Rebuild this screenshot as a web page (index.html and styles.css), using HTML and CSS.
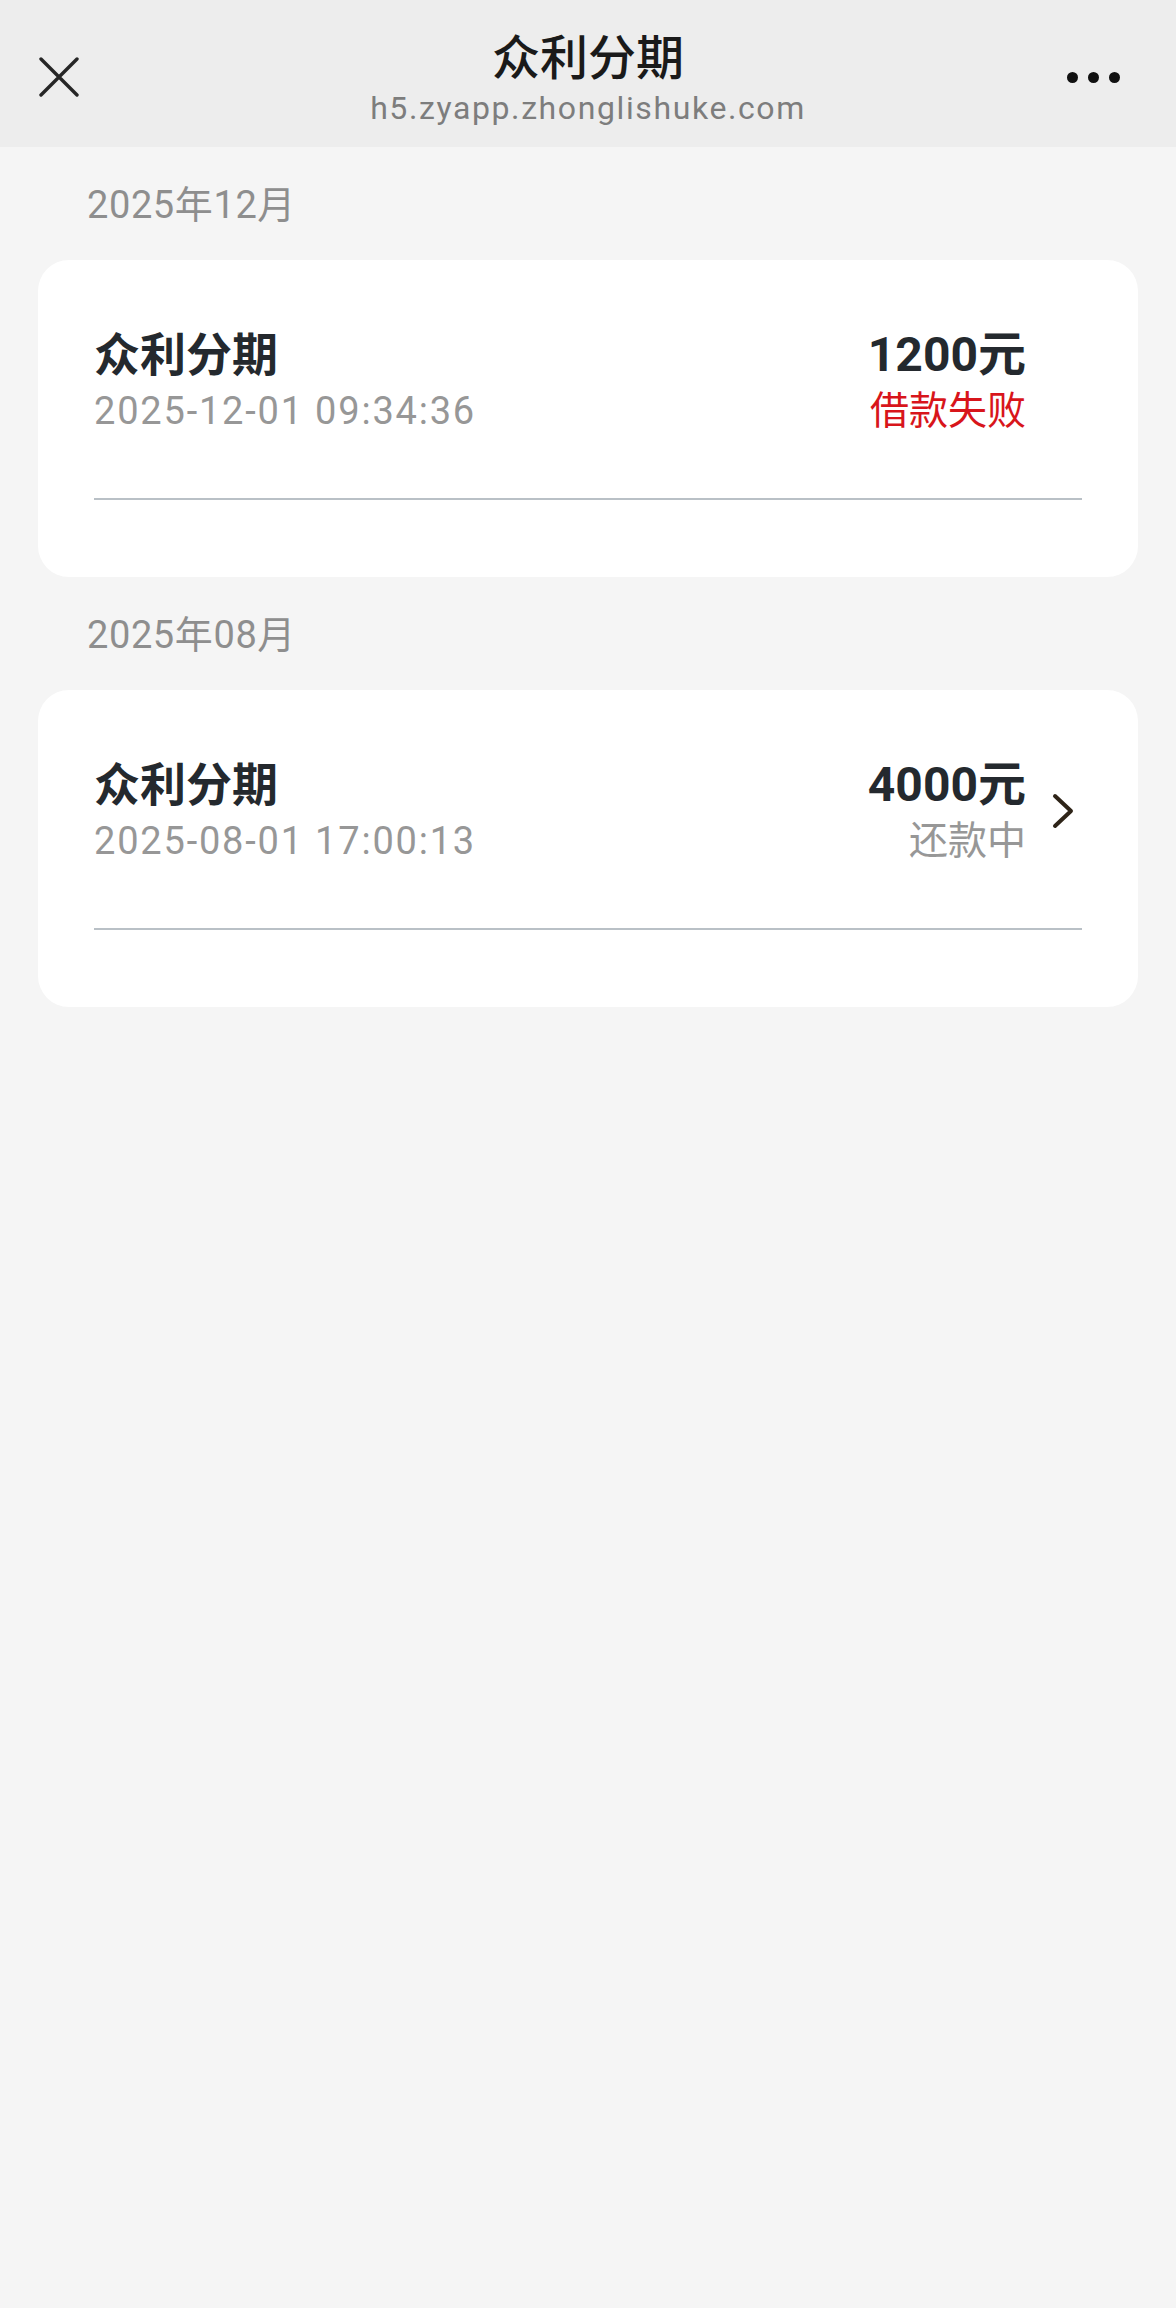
FILE: index.html
```html
<!DOCTYPE html>
<html lang="zh-CN">

<head>
    <meta charset="UTF-8">
    <meta name="viewport" content="width=device-width, initial-scale=1.0">
    <title>众利分期</title>
    <link rel="stylesheet" href="styles.css">
</head>

<body>
    <header class="topbar">
        <div class="topbar-left">
            <svg class="icon-close" width="40" height="40" viewBox="0 0 40 40">
                <path d="M2 2 L38 38 M38 2 L2 38" stroke="#262626" stroke-width="3.4" stroke-linecap="round" fill="none"/>
            </svg>
        </div>
        <div class="topbar-title">
            <div class="title">众利分期</div>
            <div class="url">h5.zyapp.zhonglishuke.com</div>
        </div>
        <div class="topbar-right">
            <span class="dot"></span>
            <span class="dot"></span>
            <span class="dot"></span>
        </div>
    </header>

    <main class="list">
        <div class="month">2025年12月</div>
        <div class="card">
            <div class="card-row">
                <div class="card-left">
                    <div class="card-title">众利分期</div>
                    <div class="card-date">2025-12-01 09:34:36</div>
                </div>
                <div class="card-right">
                    <div class="amount">1200元</div>
                    <div class="status status-fail">借款失败</div>
                </div>
                <div class="arrow-slot"></div>
            </div>
            <div class="card-line"></div>
        </div>

        <div class="month">2025年08月</div>
        <div class="card">
            <div class="card-row">
                <div class="card-left">
                    <div class="card-title">众利分期</div>
                    <div class="card-date">2025-08-01 17:00:13</div>
                </div>
                <div class="card-right">
                    <div class="amount">4000元</div>
                    <div class="status">还款中</div>
                </div>
                <div class="arrow-slot">
                    <svg class="arrow" width="24" height="36" viewBox="0 0 24 36">
                        <path d="M4 3 L20 18 L4 33" stroke="#2e2418" stroke-width="4" stroke-linecap="round" stroke-linejoin="round" fill="none"/>
                    </svg>
                </div>
            </div>
            <div class="card-line"></div>
        </div>
    </main>
</body>

</html>
```

FILE: styles.css
```css
body {
    margin: 0;
    min-height: 100vh;
    background-color: #f5f5f5;
    font-family: Roboto, "Noto Sans CJK SC", sans-serif;
    color: #24292e;
}

.topbar {
    display: grid;
    grid-template-columns: 1fr auto 1fr;
    height: 147px;
    background-color: #ededed;
}

.topbar-left {
    padding: 57px 0 0 39px;
}

.icon-close {
    display: block;
}

.topbar-title {
    padding-top: 31px;
    text-align: center;
}

.title {
    font-size: 48px;
    line-height: 56px;
    font-weight: 500;
    color: #1a1a1a;
}

.url {
    margin-top: 2px;
    font-size: 32px;
    line-height: 38px;
    color: #7d7d7d;
    letter-spacing: 1.6px;
}

.topbar-right {
    display: flex;
    justify-content: flex-end;
    gap: 10px;
    padding: 72px 56px 0 0;
}

.dot {
    width: 11px;
    height: 11px;
    border-radius: 50%;
    background-color: #111;
}

.list {
    padding: 0 38px;
}

.month {
    padding: 30px 0 27px 49px;
    font-size: 38px;
    line-height: 56px;
    color: #8e8e8e;
    letter-spacing: 0.6px;
}

.card {
    background-color: #fff;
    border-radius: 31px;
    padding: 66px 56px 77px;
}

.card-row {
    display: flex;
    align-items: flex-start;
}

.card-left {
    flex: 1;
}

.card-title {
    font-size: 46px;
    line-height: 58px;
    font-weight: 700;
}

.card-date,
.status {
    margin-top: 2px;
    font-size: 38px;
    line-height: 50px;
    color: #979797;
}

.card-date {
    letter-spacing: 1.8px;
}

.card-right {
    text-align: right;
}

.amount {
    font-size: 48px;
    line-height: 58px;
    font-weight: 700;
}

.status {
    font-size: 39px;
}

.status-fail {
    color: #d8151b;
}

.arrow-slot {
    width: 56px;
    align-self: center;
}

.arrow {
    display: block;
    margin-left: 25px;
}

.card-line {
    margin-top: 62px;
    height: 2px;
    background-color: #b9c0c6;
}
```
